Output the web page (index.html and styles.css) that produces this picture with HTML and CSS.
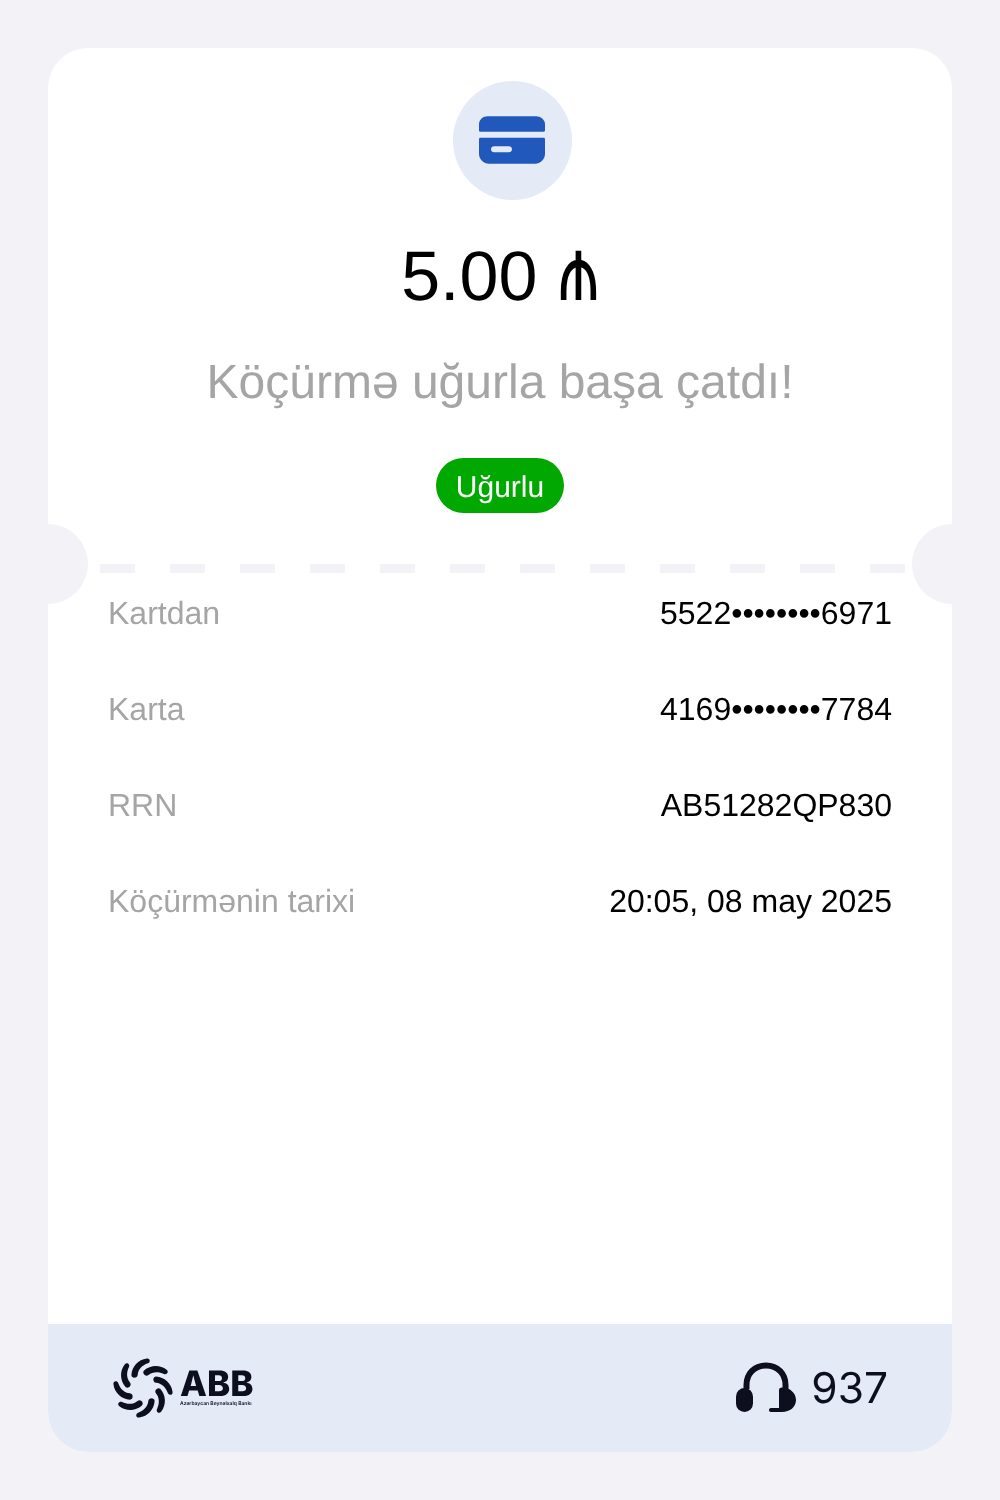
FILE: index.html
```html
<!DOCTYPE html>
<html lang="az">
<head>
<meta charset="utf-8">
<title>Köçürmə</title>
<link rel="stylesheet" href="styles.css">
</head>
<body>
<main class="card">
  <span class="notch notch-left"></span>
  <span class="notch notch-right"></span>
  <section class="head">
    <div class="icon-circle">
      <svg class="card-icon" width="68" height="50" viewBox="0 1.300 68 50">
        <path class="blue" d="M1 15.500V9.500C1 5 5 1.500 9.500 1.500H58C62.500 1.500 67 5 67 9.500V15.500C67 16.500 66 17 65.500 17H2.500C1.500 17 1 16.500 1 15.500Z"/>
        <path class="blue" fill-rule="evenodd" d="M1 24.500C1 23.500 1.500 23 2.500 23H65.500C66.500 23 67 23.500 67 24.500V39C67 44.500 62.500 49 57 49H11C5.500 49 1 44.500 1 39ZM16 31.500C14.500 31.500 13 32.800 13 34.500C13 36.200 14.500 37.500 16 37.500H31C32.500 37.500 34 36.200 34 34.500C34 32.800 32.500 31.500 31 31.500Z"/>
      </svg>
    </div>
    <h1 class="amount">5.00 <span class="manat">₼</span></h1>
    <p class="subtitle">Köçürmə uğurla başa çatdı!</p>
    <span class="pill">Uğurlu</span>
  </section>
  <div class="divider"></div>
  <section class="rows">
    <div class="row"><span class="label">Kartdan</span><span class="value">5522••••••••6971</span></div>
    <div class="row"><span class="label">Karta</span><span class="value">4169••••••••7784</span></div>
    <div class="row"><span class="label">RRN</span><span class="value">AB51282QP830</span></div>
    <div class="row"><span class="label">Köçürmənin tarixi</span><span class="value">20:05, 08 may 2025</span></div>
  </section>
  <footer class="foot">
    <div class="logo">
      <svg class="swirl" width="62" height="64" viewBox="-32 -33 64 66">
        <defs><path id="petal" d="M4 -30.500C-5 -29.500 -11.500 -22 -12 -13.500C-12 -10 -6 -9.500 -5.500 -13.500C-5 -19 -1 -23.500 5 -25.500C8 -26.500 7.500 -31 4 -30.500Z"/></defs>
        <use href="#petal"/>
        <use href="#petal" transform="rotate(45)"/>
        <use href="#petal" transform="rotate(90)"/>
        <use href="#petal" transform="rotate(135)"/>
        <use href="#petal" transform="rotate(180)"/>
        <use href="#petal" transform="rotate(225)"/>
        <use href="#petal" transform="rotate(270)"/>
        <use href="#petal" transform="rotate(315)"/>
      </svg>
      <div class="logo-text">
        <span class="abb">ABB</span>
        <span class="bank">Azərbaycan Beynəlxalq Bankı</span>
      </div>
    </div>
    <div class="phone">
      <svg class="headset" width="62" height="52" viewBox="0 0 62 52">
        <path class="band" d="M11.500 27V23C11.500 12 19 3.500 31 3.500C43 3.500 50.500 12 50.500 23V27"/>
        <rect class="ink" x="1" y="26" width="17" height="24" rx="8.500"/>
        <path class="ink" d="M47 25.500C55 25.500 61 31 61 38C61 45 55 50 47 50H36C34.500 50 34 49 34 48C34 47 34.500 46 36 46H44V28C44 26.500 45 25.500 47 25.500Z"/>
      </svg>
      <span class="phone-num">937</span>
    </div>
  </footer>
</main>
</body>
</html>
```
FILE: styles.css
```css
* { box-sizing: border-box; }
html, body { margin: 0; padding: 0; }
body {
  background: #f2f2f7;
  padding: 48px;
  font-family: "Liberation Sans", Arial, sans-serif;
  text-rendering: geometricPrecision;
}
.card {
  position: relative;
  height: 1404px;
  background: #fff;
  border-radius: 40px;
  overflow: hidden;
  display: flex;
  flex-direction: column;
  will-change: transform;
}
.notch {
  position: absolute;
  top: 476px;
  width: 80px;
  height: 80px;
  border-radius: 50%;
  background: #f2f2f7;
}
.notch-left { left: -40px; }
.notch-right { right: -40px; }
.head {
  display: flex;
  flex-direction: column;
  align-items: center;
  padding-top: 33px;
  height: 516px;
}
.icon-circle {
  width: 119px;
  height: 119px;
  border-radius: 50%;
  background: #e4eaf6;
  margin-left: 24px;
  display: flex;
  align-items: center;
  justify-content: center;
}
.blue { fill: #2058bb; }
.amount {
  margin: 36px 0 0;
  font-size: 70px;
  line-height: 80px;
  font-weight: 400;
  color: #000;
}
.manat {
  display: inline-block;
  margin-left: 1px;
  font-family: Roboto, sans-serif;
  font-size: 62px;
  line-height: 60px;
  transform: scaleY(1.500);
  transform-origin: 50% 82%;
}
.subtitle {
  margin: 39px 0 0;
  font-size: 48px;
  line-height: 56px;
  color: #a5a5a5;
}
.pill {
  margin-top: 47px;
  width: 128px;
  height: 55px;
  padding-top: 4px;
  border-radius: 28px;
  background: #00a800;
  color: #fff;
  font-size: 30px;
  line-height: 51px;
  text-align: center;
}
.divider {
  margin-left: 52px;
  width: 805px;
  height: 9px;
  background: repeating-linear-gradient(90deg, #f2f2f7 0 35px, transparent 35px 70px);
}
.rows {
  display: flex;
  flex-direction: column;
  gap: 56px;
  margin-top: 20px;
  padding: 0 60px;
}
.row {
  display: flex;
  justify-content: space-between;
  align-items: center;
  height: 40px;
  font-size: 32px;
}
.label { color: #a5a5a5; }
.value { color: #000; }
.foot {
  margin-top: auto;
  height: 128px;
  background: #e4eaf6;
  display: flex;
  align-items: center;
  justify-content: space-between;
  padding: 0 64px;
  color: #0d0f1e;
}
.logo { display: flex; align-items: center; }
.swirl { fill: #0d0f1e; }
.logo-text { display: flex; flex-direction: column; margin-left: 6px; margin-top: -2px; }
.abb {
  font-family: Inter, sans-serif;
  font-weight: 800;
  font-size: 35px;
  line-height: 33px;
}
.bank {
  font-family: Inter, sans-serif;
  font-size: 5px;
  font-weight: 600;
  line-height: 6px;
  white-space: nowrap;
}
.phone { display: flex; align-items: center; gap: 14px; }
.headset { display: block; }
.band { fill: none; stroke: #0d0f1e; stroke-width: 6; }
.ink { fill: #0d0f1e; }
.phone-num {
  font-family: Inter, sans-serif;
  font-size: 42.500px;
  line-height: 56px;
  margin-top: 2px;
}
```
